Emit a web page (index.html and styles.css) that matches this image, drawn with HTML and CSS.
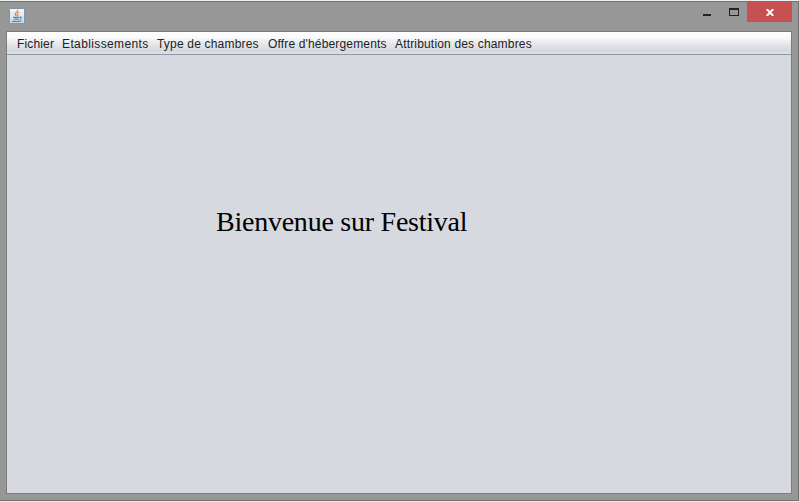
FILE: index.html
```
<!DOCTYPE html>
<html lang="fr">
<head>
<meta charset="utf-8">
<title>Festival</title>
<link rel="stylesheet" href="styles.css">
</head>
<body>
<div class="window">
  <header class="titlebar">
    <svg class="app-icon" width="16" height="16" viewBox="0 0 16 16">
      <defs>
        <linearGradient id="tile" x1="0" y1="0" x2="0" y2="1">
          <stop offset="0" stop-color="#f8f8f8"/>
          <stop offset="1" stop-color="#c6d5e2"/>
        </linearGradient>
      </defs>
      <rect x=".5" y=".5" width="15" height="15" rx=".7" fill="url(#tile)" stroke="#7795ad"/>
      <path d="M8.8 1.8c.7 2-3.4 2.7-2.5 4.6.3.7.9 1.1 1 1.8M10.3 4.2c-2 .8-2.5 1.7-1.7 2.6.4.5.2 1-.3 1.4" fill="none" stroke="#e58335" stroke-width="1.2"/>
      <path d="M4 9.3h6.5M4.8 11.2h5.3M3 13.2c2 .5 7.2.4 9.3-.4M10.8 9c2.6-.6 2.2 1.6.1 2.2" fill="none" stroke="#476f94" stroke-width="1"/>
    </svg>
    <div class="controls">
      <svg class="minimize" width="8" height="2"><rect width="8" height="2" fill="#222"/></svg>
      <svg class="maximize" width="10" height="8"><path d="M0 0h10v8H0zM1 2v5h8V2z" fill="#222" fill-rule="evenodd"/></svg>
      <div class="close">
        <svg width="8" height="7" viewBox="0 0 8 7"><path d="M.7 0 7.3 7M7.3 0 .7 7" stroke="#fff" stroke-width="1.9"/></svg>
      </div>
    </div>
  </header>
  <div class="frame">
    <nav class="menubar">
      <span class="w-file">Fichier</span>
      <span class="w-places">Etablissements</span>
      <span class="w-types">Type de chambres</span>
      <span class="w-offers">Offre d'hébergements</span>
      <span class="w-rooms">Attribution des chambres</span>
    </nav>
    <main class="content"><h1>Bienvenue sur Festival</h1></main>
  </div>
</div>
</body>
</html>
```
FILE: styles.css
```
* { box-sizing: border-box; }
body {
  margin: 0;
  height: 502px;
  padding: 1px 0;
  background: #edf0ef;
  overflow: hidden;
  font-family: "Liberation Sans", Arial, sans-serif;
}
svg { display: block; }
.window {
  width: 799px;
  height: 500px;
  display: flex;
  flex-direction: column;
  background: #979797;
  border: 1px solid #707070;
  border-left: 0;
  padding: 0 6px 6px;
}
.titlebar {
  height: 29px;
  display: flex;
  justify-content: space-between;
  padding-left: 3px;
}
.app-icon { margin-top: 6px; }
.controls { display: flex; align-items: flex-start; }
.minimize { margin: 12px 18px 0 0; }
.maximize { margin: 6px 8px 0 0; }
.close {
  width: 45px;
  height: 20px;
  display: flex;
  align-items: center;
  justify-content: center;
  background: #c75050;
}
.frame {
  flex: 1;
  display: flex;
  flex-direction: column;
  border: 1px solid #7c7c7c;
  background: #d6d9e0;
}
.menubar {
  height: 23px;
  display: flex;
  padding-left: 10px;
  border-bottom: 1px solid #9297a1;
  background: linear-gradient(#fff 0%, #fafafb 25%, #e4e6ea 55%, #d6d9e0 85%, #dcdfe5 100%);
  color: #222;
  font-size: 12px;
  line-height: 24px;
  white-space: nowrap;
}
.w-file { width: 45px; letter-spacing: .15px; }
.w-places { width: 95px; letter-spacing: .38px; }
.w-types { width: 111px; letter-spacing: .19px; }
.w-offers { width: 127px; letter-spacing: .16px; }
.w-rooms { letter-spacing: .17px; }
.content { flex: 1; padding: 150px 0 0 209px; }
h1 {
  margin: 0;
  font: 28px/34px "Liberation Serif", "Times New Roman", serif;
  letter-spacing: -.24px;
  color: #000;
}
```
